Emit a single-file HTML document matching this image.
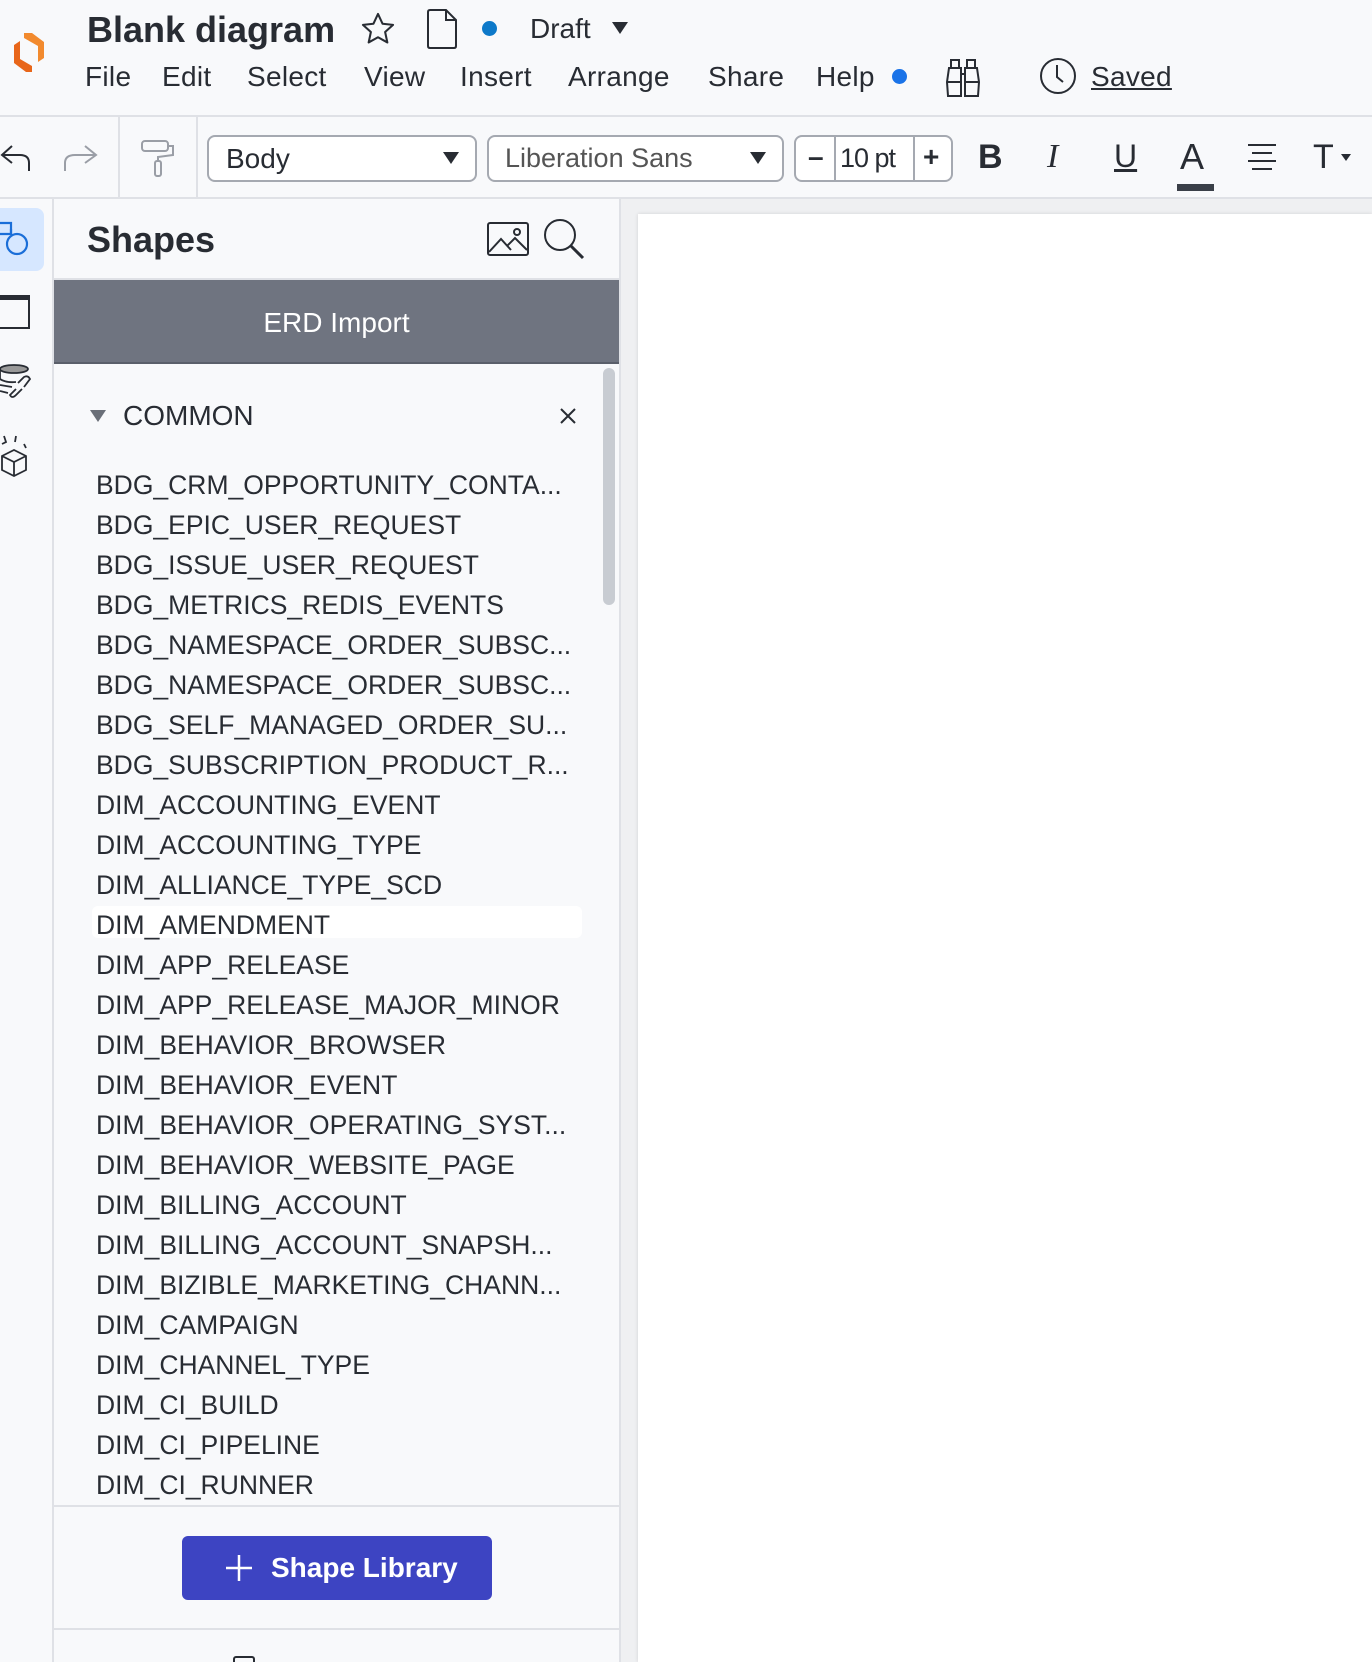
<!DOCTYPE html>
<html><head><meta charset="utf-8">
<style>
*{box-sizing:border-box;margin:0;padding:0}
body{width:1372px;height:1662px;overflow:hidden;background:#f8f9fb;font-family:"Liberation Sans",sans-serif;color:#282c33;position:relative}
.a{position:absolute}
.menu{position:absolute;top:61px;font-size:28px;color:#282c33;letter-spacing:0.3px}
.item{position:absolute;left:96px;font-size:26.5px;height:40px;line-height:40px;white-space:nowrap;color:#282c33}
.box{position:absolute;top:135px;height:47px;border:2px solid #a5a9b1;border-radius:8px;background:#fff}
</style></head><body>
<svg class="a" style="left:10px;top:30px" width="38" height="45" viewBox="0 0 38 45">
<path d="M14 3 L22 3 L34 12 L34 28 L28 32 L28 16 L14 8Z" fill="#f28a2e"/>
<path d="M4 15 L10 11 L10 29 L22 36 L22 42 L16 42 L4 33Z" fill="#e8661a"/>
</svg>
<div class="a" style="left:87px;top:9px;font-size:36px;font-weight:bold;color:#282c33">Blank diagram</div>
<svg class="a" style="left:358px;top:10px" width="40" height="38" viewBox="0 0 24 24"><path d="M12 2.5l2.9 6.2 6.6.7-5 4.5 1.4 6.6L12 17.2 6.1 20.5l1.4-6.6-5-4.5 6.6-.7z" fill="none" stroke="#282c33" stroke-width="1.3" stroke-linejoin="round"/></svg>
<svg class="a" style="left:426px;top:9px" width="32" height="40" viewBox="0 0 32 40"><path d="M2 3 Q2 1 4 1 L20 1 L30 11 L30 37 Q30 39 28 39 L4 39 Q2 39 2 37Z M20 1 L20 11 L30 11" fill="none" stroke="#282c33" stroke-width="2"/></svg>
<div class="a" style="left:482px;top:21px;width:15px;height:15px;border-radius:50%;background:#0d79c9"></div>
<div class="a" style="left:530px;top:13px;font-size:28px">Draft</div>
<div class="a" style="left:612px;top:22px;width:0;height:0;border-left:8px solid transparent;border-right:8px solid transparent;border-top:12px solid #282c33"></div>
<div class="menu" style="left:85px">File</div>
<div class="menu" style="left:162px">Edit</div>
<div class="menu" style="left:247px">Select</div>
<div class="menu" style="left:364px">View</div>
<div class="menu" style="left:460px">Insert</div>
<div class="menu" style="left:568px">Arrange</div>
<div class="menu" style="left:708px">Share</div>
<div class="menu" style="left:816px">Help</div>
<div class="a" style="left:892px;top:69px;width:15px;height:15px;border-radius:50%;background:#1a73e8"></div>
<svg class="a" style="left:944px;top:58px" width="38" height="40" viewBox="0 0 38 40"><g fill="none" stroke="#282c33" stroke-width="2"><rect x="7" y="2" width="8" height="8"/><rect x="23" y="2" width="8" height="8"/><path d="M5 10 L17 10 L17 38 L4 38 L3 24Z M21 10 L33 10 L35 24 L34 38 L21 38Z M3 24 L17 24 M21 24 L35 24 M17 16 L21 16"/></g></svg>
<svg class="a" style="left:1039px;top:57px" width="38" height="38" viewBox="0 0 38 38"><circle cx="19" cy="19" r="17" fill="none" stroke="#282c33" stroke-width="2"/><path d="M18 8 L18 20 L24 25" fill="none" stroke="#282c33" stroke-width="2"/></svg>
<div class="menu" style="left:1091px;text-decoration:underline">Saved</div>
<div class="a" style="left:0;top:115px;width:1372px;height:2px;background:#dfe1e6"></div>
<div class="a" style="left:0;top:197px;width:1372px;height:2px;background:#dfe1e6"></div>
<div class="a" style="left:118px;top:117px;width:2px;height:80px;background:#dfe1e6"></div>
<div class="a" style="left:196px;top:117px;width:2px;height:80px;background:#dfe1e6"></div>
<svg class="a" style="left:0;top:143px" width="34" height="30" viewBox="0 0 34 30"><path d="M12 3 L2 12 L12 20 M2 12 L20 12 Q29 12 29 20 L29 28" fill="none" stroke="#282c33" stroke-width="2"/></svg>
<svg class="a" style="left:61px;top:143px" width="38" height="30" viewBox="0 0 38 30"><path d="M24 3 L35 12 L24 20 M35 12 L14 12 Q4 12 4 20 L4 28" fill="none" stroke="#9a9ea6" stroke-width="2"/></svg>
<svg class="a" style="left:140px;top:138px" width="36" height="40" viewBox="0 0 36 40"><g fill="none" stroke="#9a9ea6" stroke-width="2"><rect x="2" y="3" width="26" height="10" rx="3"/><path d="M28 8 L33 8 L33 17 L18 19 L18 23"/><rect x="15" y="23" width="6" height="15" rx="2"/></g></svg>
<div class="box" style="left:207px;width:270px"><span class="a" style="left:17px;top:6px;font-size:28px">Body</span><span class="a" style="right:16px;top:15px;border-left:8px solid transparent;border-right:8px solid transparent;border-top:12px solid #282c33"></span></div>
<div class="box" style="left:487px;width:297px"><span class="a" style="left:16px;top:6px;font-size:27px;color:#555">Liberation Sans</span><span class="a" style="right:16px;top:15px;border-left:8px solid transparent;border-right:8px solid transparent;border-top:12px solid #282c33"></span></div>
<div class="box" style="left:794px;width:159px">
<div class="a" style="left:38px;top:0;width:2px;height:43px;background:#a5a9b1"></div>
<div class="a" style="left:117px;top:0;width:2px;height:43px;background:#a5a9b1"></div>
<span class="a" style="left:12px;top:4px;font-size:28px;font-weight:bold">–</span>
<span class="a" style="left:44px;top:6px;font-size:27px;letter-spacing:-1px">10 pt</span>
<span class="a" style="left:127px;top:4px;font-size:28px;font-weight:bold">+</span></div>
<div class="a" style="left:978px;top:138px;font-size:34px;font-weight:bold">B</div>
<div class="a" style="left:1047px;top:138px;font-size:34px;font-family:'Liberation Serif',serif;font-style:italic">I</div>
<div class="a" style="left:1114px;top:138px;font-size:32px;text-decoration:underline">U</div>
<div class="a" style="left:1180px;top:136px;font-size:36px">A</div>
<div class="a" style="left:1177px;top:184px;width:37px;height:7px;background:#3a3f48"></div>
<svg class="a" style="left:1247px;top:142px" width="30" height="30" viewBox="0 0 30 30"><path d="M1 3H29M5 11H25M1 19H29M5 27H25" stroke="#282c33" stroke-width="2"/></svg>
<div class="a" style="left:1313px;top:138px;font-size:34px">T</div>
<div class="a" style="left:1341px;top:154px;border-left:5px solid transparent;border-right:5px solid transparent;border-top:7px solid #282c33"></div>
<div class="a" style="left:0;top:208px;width:44px;height:63px;background:#d6e7ff;border-radius:0 8px 8px 0"></div>
<svg class="a" style="left:0;top:220px" width="32" height="40" viewBox="0 0 32 40"><g fill="none" stroke="#1a6ed8" stroke-width="2.2"><path d="M0 3H11V14H0"/><circle cx="17" cy="24" r="10"/><path d="M11 9V14"/></g></svg>
<svg class="a" style="left:0;top:294px" width="32" height="36" viewBox="0 0 32 36"><path d="M0 2H29V34H0" fill="none" stroke="#282c33" stroke-width="2"/><rect x="0" y="1" width="30" height="5" fill="#282c33"/></svg>
<svg class="a" style="left:0;top:363px" width="36" height="42" viewBox="0 0 36 42"><g fill="none" stroke="#282c33" stroke-width="1.8"><ellipse cx="14" cy="6" rx="14" ry="4" fill="#999"/><path d="M0 6V16M0 16Q6 20 16 19M0 22L12 24M0 28L8 30"/><path d="M18 20L24 14Q28 12 30 16L24 24M22 26L16 32Q12 36 10 32L16 26"/></g></svg>
<svg class="a" style="left:0;top:432px" width="32" height="46" viewBox="0 0 32 46"><g fill="none" stroke="#282c33" stroke-width="1.8"><path d="M2 24L14 18L26 24L26 38L14 44L2 38Z M2 24L14 30L26 24M14 30V44"/><path d="M4 4L6 10L2 12M16 4L15 10M24 12L26 16"/></g></svg>
<div class="a" style="left:52px;top:199px;width:2px;height:1463px;background:#dfe1e6"></div>
<div class="a" style="left:619px;top:199px;width:2px;height:1463px;background:#dfe1e6"></div>
<div class="a" style="left:621px;top:199px;width:751px;height:1463px;background:#eff0f2"></div>
<div class="a" style="left:638px;top:214px;width:734px;height:1448px;background:#fff;box-shadow:0 0 4px rgba(0,0,0,0.12)"></div>
<div class="a" style="left:87px;top:219px;font-size:36px;font-weight:bold">Shapes</div>
<svg class="a" style="left:487px;top:222px" width="42" height="34" viewBox="0 0 42 34"><g fill="none" stroke="#282c33" stroke-width="2"><rect x="1" y="1" width="40" height="32" rx="2"/><path d="M2 30L14 17L24 28M20 24L28 16L40 28"/><circle cx="30" cy="10" r="3"/></g></svg>
<svg class="a" style="left:543px;top:218px" width="44" height="44" viewBox="0 0 44 44"><g fill="none" stroke="#282c33" stroke-width="2"><circle cx="17" cy="17" r="15"/><path d="M28 28L40 40" stroke-width="3"/></g></svg>
<div class="a" style="left:54px;top:278px;width:565px;height:2px;background:#dfe1e6"></div>
<div class="a" style="left:54px;top:280px;width:565px;height:84px;background:#6f7480;color:#fff;font-size:28px;text-align:center;line-height:86px">ERD Import</div>
<div class="a" style="left:54px;top:362px;width:565px;height:2px;background:#5a5f6a"></div>
<div class="a" style="left:603px;top:368px;width:12px;height:237px;background:#c8ccd2;border-radius:6px"></div>
<div class="a" style="left:90px;top:410px;border-left:8px solid transparent;border-right:8px solid transparent;border-top:12px solid #6a6f78"></div>
<div class="a" style="left:123px;top:400px;font-size:28px">COMMON</div>
<svg class="a" style="left:559px;top:407px" width="18" height="18" viewBox="0 0 18 18"><path d="M2 2L16 16M16 2L2 16" stroke="#282c33" stroke-width="2"/></svg>
<div class="a" style="left:92px;top:906px;width:490px;height:32px;background:#fff;border-radius:6px"></div>
<div class="item" style="top:465px">BDG_CRM_OPPORTUNITY_CONTA...</div>
<div class="item" style="top:505px">BDG_EPIC_USER_REQUEST</div>
<div class="item" style="top:545px">BDG_ISSUE_USER_REQUEST</div>
<div class="item" style="top:585px">BDG_METRICS_REDIS_EVENTS</div>
<div class="item" style="top:625px">BDG_NAMESPACE_ORDER_SUBSC...</div>
<div class="item" style="top:665px">BDG_NAMESPACE_ORDER_SUBSC...</div>
<div class="item" style="top:705px">BDG_SELF_MANAGED_ORDER_SU...</div>
<div class="item" style="top:745px">BDG_SUBSCRIPTION_PRODUCT_R...</div>
<div class="item" style="top:785px">DIM_ACCOUNTING_EVENT</div>
<div class="item" style="top:825px">DIM_ACCOUNTING_TYPE</div>
<div class="item" style="top:865px">DIM_ALLIANCE_TYPE_SCD</div>
<div class="item" style="top:905px">DIM_AMENDMENT</div>
<div class="item" style="top:945px">DIM_APP_RELEASE</div>
<div class="item" style="top:985px">DIM_APP_RELEASE_MAJOR_MINOR</div>
<div class="item" style="top:1025px">DIM_BEHAVIOR_BROWSER</div>
<div class="item" style="top:1065px">DIM_BEHAVIOR_EVENT</div>
<div class="item" style="top:1105px">DIM_BEHAVIOR_OPERATING_SYST...</div>
<div class="item" style="top:1145px">DIM_BEHAVIOR_WEBSITE_PAGE</div>
<div class="item" style="top:1185px">DIM_BILLING_ACCOUNT</div>
<div class="item" style="top:1225px">DIM_BILLING_ACCOUNT_SNAPSH...</div>
<div class="item" style="top:1265px">DIM_BIZIBLE_MARKETING_CHANN...</div>
<div class="item" style="top:1305px">DIM_CAMPAIGN</div>
<div class="item" style="top:1345px">DIM_CHANNEL_TYPE</div>
<div class="item" style="top:1385px">DIM_CI_BUILD</div>
<div class="item" style="top:1425px">DIM_CI_PIPELINE</div>
<div class="item" style="top:1465px">DIM_CI_RUNNER</div>
<div class="a" style="left:54px;top:1505px;width:565px;height:125px;background:#f8f9fb;border-top:2px solid #dfe1e6;border-bottom:2px solid #dfe1e6"></div>
<div class="a" style="left:182px;top:1536px;width:310px;height:64px;background:#3d44c2;border-radius:6px;color:#fff;font-size:28px;font-weight:bold;line-height:64px;padding-left:89px">Shape Library</div>
<svg class="a" style="left:225px;top:1554px" width="28" height="28" viewBox="0 0 28 28"><path d="M14 1V27M1 14H27" stroke="#fff" stroke-width="2.5"/></svg>
<div class="a" style="left:233px;top:1656px;width:22px;height:6px;border:2px solid #282c33;border-bottom:none;border-radius:3px 3px 0 0"></div>
</body></html>
